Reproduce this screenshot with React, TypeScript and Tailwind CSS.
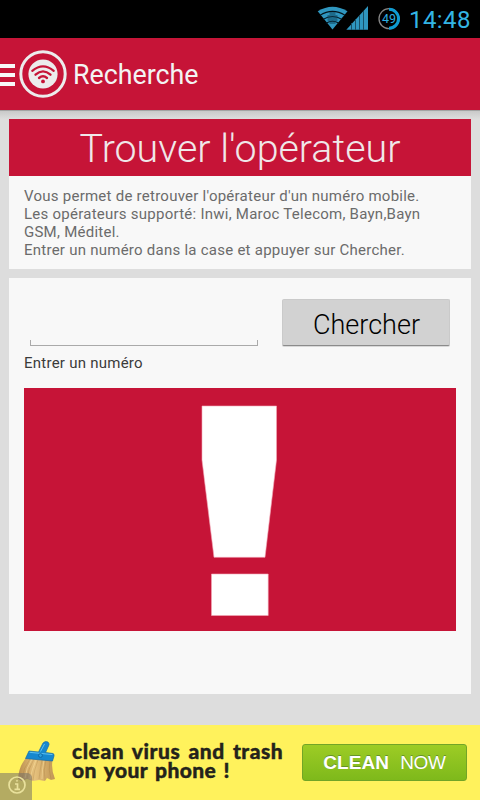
import type { ReactNode } from 'react';

function SignalIcons() {
  return (
    <svg width="84" height="30" viewBox="0 0 84 30" fill="none" className="shrink-0">
      {/* wifi */}
      <path d="M15.500 29.500 L.7 11.300 Q15.500 2.200 30.500 11.300 Z" fill="#2f96bf" />
      <g stroke="#03141c" strokeWidth="1.100">
        <path d="M2.800 15.400 Q15.500 7.400 28.300 15.400" />
        <path d="M6 19.400 Q15.500 13.600 25 19.400" />
        <path d="M9 23.200 Q15.500 19.400 22 23.200" />
      </g>
      <path d="M12.500 12h6v3h2v6h-2v3h-6v-3h-2v-6h2z" fill="#0b3f57" opacity=".5" />
      {/* mobile signal */}
      <path d="M29.300 29.700 L51 6 V29.700 Z" fill="#2f96bf" />
      <path d="M34.500 23v7M38.500 19v11M42.500 15v15M46.500 11v19" stroke="#174f68" strokeWidth="1" />
      {/* battery */}
      <circle cx="72" cy="18.700" r="10" stroke="#858585" strokeWidth="1.300" />
      <path d="M72 9.200 A9.500 9.500 0 0 1 72 28.200" stroke="#0d9bd2" strokeWidth="3" />
      <text
        x="72"
        y="23.100"
        textAnchor="middle"
        fontSize="12.500"
        fontFamily="Roboto, sans-serif"
        fill="#2daee0"
      >
        49
      </text>
    </svg>
  );
}

function StatusBar() {
  return (
    <div className="flex h-[38px] items-start bg-black pl-[317px] text-[#33b5e5]">
      <SignalIcons />
      <span className="ml-[8px] mt-[5px] whitespace-nowrap text-[24px] leading-[30px] tracking-[0.4px]">
        14:48
      </span>
    </div>
  );
}

function AppLogo() {
  return (
    <svg width="48" height="48" viewBox="0 0 48 48" fill="none" className="ml-[4px] shrink-0">
      <circle cx="24" cy="24" r="22.200" stroke="#ececec" strokeWidth="3" />
      <circle cx="24" cy="24" r="14.600" fill="#ececec" />
      <g stroke="#c61437" strokeWidth="2.300" strokeLinecap="round">
        <path d="M13.300 20.800 Q24 12 34.700 20.800" />
        <path d="M16.500 24.700 Q24 18 31.500 24.700" />
        <path d="M20 28 Q24 24.600 28 28" />
      </g>
      <circle cx="24" cy="31.400" r="1.900" fill="#c61437" />
    </svg>
  );
}

function Header() {
  return (
    <header className="flex h-[72px] items-center bg-[#c61437]">
      <div className="mt-[2px] flex w-[15px] flex-col gap-[5px]">
        <div className="h-[4px] bg-[#f8f8f8]" />
        <div className="h-[4px] bg-[#f8f8f8]" />
        <div className="h-[4px] bg-[#f8f8f8]" />
      </div>
      <AppLogo />
      <h1 className="ml-[6px] mt-[2px] text-[26.8px] leading-[32px] text-[#f3f3f3]">Recherche</h1>
    </header>
  );
}

function Card({ className, children }: { className: string; children: ReactNode }) {
  return <section className={`mx-[9px] bg-[#f8f8f8] ${className}`}>{children}</section>;
}

function Warning() {
  return (
    <div className="mx-[15px] mt-[16px] h-[243px] bg-[#c61437]">
      <svg width="432" height="243" viewBox="0 0 432 243" fill="#fff" stroke="#f4a9b8" strokeWidth=".6">
        <path d="M178 18h74.500v54L241 169.300H190L178 72z" />
        <path d="M187.500 186h56.700v41.500h-56.700z" />
      </svg>
    </div>
  );
}

function Broom() {
  return (
    <svg width="40" height="43" viewBox="0 0 40 43">
      <defs>
        <linearGradient id="bristles" x1="0" y1="0" x2="1" y2="0">
          <stop offset="0" stopColor="#b98d4c" />
          <stop offset=".45" stopColor="#e6c17d" />
          <stop offset="1" stopColor="#c19654" />
        </linearGradient>
      </defs>
      <path
        d="M10 17 L35.500 20 Q34 30 38 39 L34 40 L30 38 L28 41 L22 40 L16 41 L10 39 L5 41 L1 39 Q2 25 10 17Z"
        fill="url(#bristles)"
      />
      <g fill="none" stroke="#8a632f" strokeWidth=".5" opacity=".4">
        <path d="M13 19Q6 28 5 39M17 19Q11 29 10 39M21 20Q17 30 16 40M25 20Q23 30 22 39M29 20Q26 30 28 40M33 20Q31 30 34 39" />
      </g>
      <g fill="none" stroke="#f4d797" strokeWidth=".7">
        <path d="M15 19Q9 28 8 38M19 20Q15 29 13 39M27 20Q25 30 25 39" />
      </g>
      <path
        d="M12 11 L21.500 12 L26 3 Q28 .5 31 2 Q33 4 31.500 6 L28.500 12.500 L36 13.500 Q37.500 14 37 16 L35.500 21 L8.500 18.500 Z"
        fill="#1688cf"
        stroke="#126ba9"
        strokeWidth=".7"
      />
      <path d="M12.500 12.300 L35.500 14.600M27.500 4 L23.500 11.500" stroke="#5cc0ef" strokeWidth="1" fill="none" />
      <circle cx="23.500" cy="15.500" r="1.900" fill="#2aa1e2" stroke="#0d5d98" strokeWidth=".8" />
    </svg>
  );
}

function AdBanner() {
  return (
    <div className="relative mt-[31px] flex h-[75px] bg-[#fff25c]">
      <div className="ml-[17px] mt-[15px] w-[40px] shrink-0">
        <Broom />
      </div>
      <div className="ml-[15px] mt-[16px] w-[230px] shrink-0 whitespace-nowrap font-[Lato,sans-serif] text-[21px] font-black leading-[19px] text-[#24231b] [-webkit-text-stroke:0.4px_#24231b]">
        <p className="tracking-[0.55px] [word-spacing:2.6px]">clean virus and trash</p>
        <p className="tracking-[0.4px] [word-spacing:2px]">on your phone !</p>
      </div>
      <div className="mt-[19px] flex h-[37px] w-[165px] items-center justify-center rounded-[3px] border border-[#72a527] bg-linear-to-b from-[#9dcc25] to-[#7eb91b] pt-[2px] font-['Liberation_Sans',sans-serif] text-[19px] text-white [text-shadow:0_-1px_0_#659329]">
        <b className="tracking-[0.1px]">CLEAN</b>
        <span className="ml-[11px] tracking-[-0.3px]">NOW</span>
      </div>
      <div className="absolute bottom-0 left-0 flex h-[27px] w-[32px] items-start rounded-tr-[5px] bg-[#777168]/55 pl-[7px] pt-[3px]">
        <svg width="20" height="20" viewBox="0 0 20 20" fill="none" stroke="#e9e19c">
          <circle cx="10" cy="9" r="8" strokeWidth="1.700" />
          <path d="M8 8h2.500v5M7.500 13.300h5.500" strokeWidth="1.700" />
          <circle cx="10" cy="4.800" r=".6" strokeWidth="1" />
        </svg>
      </div>
    </div>
  );
}

export default function App() {
  return (
    <div className="h-[800px] w-[480px] overflow-hidden bg-[#dddddd] font-[Roboto,sans-serif]">
      <StatusBar />
      <Header />
      <div className="h-[9px] border-t border-[#a3a3a3] bg-linear-to-b from-[#c9c9c9] to-[#dddddd]" />
      <Card className="h-[150px]">
        <h2 className="h-[57px] bg-[#c61437] text-center text-[39.4px] font-light leading-[60px] text-[#f0e7e9]">
          Trouver l'opérateur
        </h2>
        <p className="whitespace-nowrap pl-[15px] pt-[11px] text-[15px] leading-[18px] tracking-[0.25px] text-[#6b6b6b]">
          Vous permet de retrouver l'opérateur d'un numéro mobile.
          <br />
          Les opérateurs supporté: Inwi, Maroc Telecom, Bayn,Bayn
          <br />
          GSM, Méditel.
          <br />
          Entrer un numéro dans la case et appuyer sur Chercher.
        </p>
      </Card>
      <Card className="mt-[9px] h-[416px] pt-[21px]">
        <div className="flex h-[48px] items-start">
          <div className="ml-[21px] mt-[41px] h-[6px] w-[228px] border-x border-b border-[#aaaaaa]" />
          <button className="ml-[24px] h-[47px] w-[168px] rounded-[2px] border border-[#cacaca] border-b-[#8b8b8b] bg-[#d2d2d2] pl-[1px] text-[27px] font-light leading-[51px] text-black shadow-[0_1px_0_#d8d8d8]">
            Chercher
          </button>
        </div>
        <p className="ml-[15px] mt-[7px] text-[15px] leading-[18px] tracking-[0.25px] text-[#3b3b3b]">
          Entrer un numéro
        </p>
        <Warning />
      </Card>
      <AdBanner />
    </div>
  );
}
